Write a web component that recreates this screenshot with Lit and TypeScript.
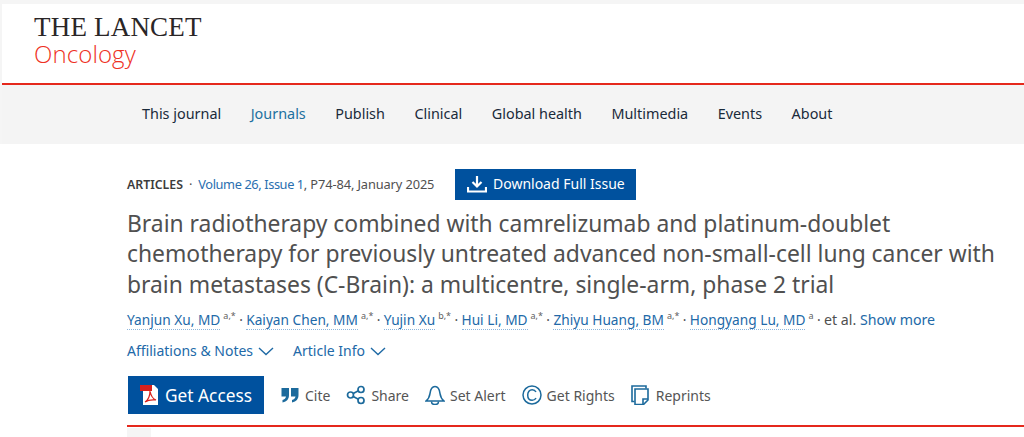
import { LitElement, html, css, svg } from "lit";
import { customElement } from "lit/decorators.js";

const authors: [string, string][] = [
  ["Yanjun Xu, MD", "a,*"],
  ["Kaiyan Chen, MM", "a,*"],
  ["Yujin Xu", "b,*"],
  ["Hui Li, MD", "a,*"],
  ["Zhiyu Huang, BM", "a,*"],
  ["Hongyang Lu, MD", "a"],
];
const nav = ["This journal", "Journals", "Publish", "Clinical", "Global health", "Multimedia", "Events", "About"];

const chevron = html`<svg class="chev" width="16" height="9" viewBox="0 0 16 9"><path d="M1 1l7 6.6L15 1" fill="none" stroke="#1f6aa5" stroke-width="1.4"/></svg>`;

const tools = [
  ["Cite", svg`<path d="M1.500 3h7.500v7c0 4-2 6.500-6.500 7.500v-2.500c2-.6 3.200-1.700 3.500-3.500H1.500zM11 3h7.500v7c0 4-2 6.500-6.500 7.500v-2.500c2-.6 3.200-1.700 3.500-3.500H11z" fill="#1c6a9c"/>`],
  ["Share", svg`<g fill="none" stroke="#1c6a9c" stroke-width="1.700"><circle cx="4.500" cy="10" r="3"/><circle cx="15" cy="4.500" r="3"/><circle cx="15" cy="15.500" r="3"/><path d="M7.200 8.600l5.200-2.800M7.200 11.400l5.200 2.800"/></g>`],
  ["Set Alert", svg`<g fill="none" stroke="#1c6a9c" stroke-width="1.600"><path d="M1 16h18c-2.500-2-3.500-4-4-7.500C14.500 4.500 13 1.500 10 1.500S5.500 4.500 5 8.500C4.500 12 3.500 14 1 16z"/><path d="M6.500 16.500c0 2 1.500 3 3.500 3s3.500-1 3.500-3"/></g>`],
  ["Get Rights", svg`<g fill="none" stroke="#1c6a9c" stroke-width="1.500"><circle cx="10" cy="10" r="9"/><path d="M14 7c-.8-1.600-2.200-2.300-3.800-2.300C7.400 4.700 5.700 7 5.700 10s1.700 5.300 4.500 5.300c1.600 0 3-.7 3.800-2.300"/></g>`],
  ["Reprints", svg`<g fill="none" stroke="#1c6a9c" stroke-width="1.600"><path d="M3.500 16.500H1V1h14v2.500"/><path d="M4 4h13v11l-4.500 4.500H4z"/><path d="M17 14h-5v5" /></g>`],
] as const;

@customElement("app-root")
export class AppRoot extends LitElement {
  static styles = css`
    :host {
      display: block;
      width: 1024px;
      height: 437px;
      overflow: hidden;
      background: #fff;
      font-family: "Noto Sans", sans-serif;
      color: #505050;
    }
    .shell {
      padding: 4px 0 0 2px;
      background: #f5f5f5;
    }
    .brand {
      background: #fff;
      height: 79px;
      box-sizing: border-box;
      padding: 11px 0 0 32px;
    }
    .lancet {
      font-family: "Liberation Serif", serif;
      font-size: 27px;
      line-height: 24px;
      letter-spacing: 0.200px;
      color: #2a2627;
    }
    .onc {
      font-family: "Open Sans", sans-serif;
      font-weight: 300;
      font-size: 24px;
      line-height: 30px;
      color: #ee3124;
      letter-spacing: 0.100px;
    }
    .nav {
      border-top: 2px solid #e5281c;
      box-sizing: border-box;
      height: 61px;
      padding: 0 0 3px 140px;
      background: #f4f4f4;
      display: flex;
      align-items: center;
      gap: 29.500px;
      font-size: 14.400px;
      color: #1a2a3a;
    }
    .nav span.active {
      color: #21709f;
    }
    .article {
      background: #fff;
      padding: 0 0 0 127px;
    }
    .metarow {
      display: flex;
      align-items: center;
      padding-top: 24px;
      height: 32px;
      font-size: 12.800px;
      color: #505050;
    }
    .metarow b {
      font-weight: 600;
      font-size: 12.300px;
      color: #3c3c3c;
    }
    .metarow .sep {
      margin: 0 6px;
    }
    .blue {
      color: #2a6fb0;
      letter-spacing: -0.400px;
    }
    .rest {
      letter-spacing: -0.100px;
    }
    .dl {
      margin-left: 21px;
      width: 181px;
      height: 31px;
      background: #00519e;
      color: #fff;
      display: flex;
      align-items: center;
      justify-content: center;
      gap: 6px;
      font-size: 14px;
      padding-bottom: 1px;
      box-sizing: border-box;
    }
    h1 {
      margin: 8.500px 0 0;
      font-weight: 400;
      font-size: 22.850px;
      line-height: 30.500px;
      color: #505050;
      width: 880px;
    }
    .authors {
      margin-top: 8px;
      font-size: 13.700px;
      line-height: 24px;
      white-space: nowrap;
    }
    .authors a {
      color: #2269a8;
      border-bottom: 1px dotted #8db6dc;
    }
    .authors sup {
      font-size: 9px;
      line-height: 0;
      color: #606060;
      margin-left: 3px;
    }
    .authors .dot {
      margin: 0 3.400px;
    }
    .tail {
      font-size: 14.200px;
    }
    .more {
      color: #2269a8;
    }
    .toggles {
      display: flex;
      gap: 19px;
      margin-top: 7px;
      font-size: 14px;
      line-height: 24px;
      color: #2269a8;
    }
    .toggles span {
      display: flex;
      align-items: center;
      gap: 5px;
    }
    .actions {
      display: flex;
      align-items: center;
      margin-top: 13px;
      height: 38px;
    }
    .access {
      width: 136px;
      height: 38px;
      margin-left: 1px;
      background: #00519e;
      color: #fff;
      display: flex;
      align-items: center;
      justify-content: center;
      gap: 5px;
      font-size: 17.300px;
    }
    .tool {
      display: flex;
      align-items: center;
      gap: 5px;
      font-size: 14px;
      color: #555;
      margin-left: 16px;
    }
    .bottomrule {
      margin-top: 11px;
      height: 2px;
      background: #e5281c;
    }
    .stub {
      width: 24px;
      height: 12px;
      margin-top: 1px;
      background: #f5f5f5;
    }
  `;

  render() {
    return html`
      <div class="shell">
        <div class="brand">
          <div class="lancet">THE LANCET</div>
          <div class="onc">Oncology</div>
        </div>
        <div class="nav">
          ${nav.map((n) => html`<span class=${n === "Journals" ? "active" : ""}>${n}</span>`)}
        </div>
      </div>
      <div class="article">
        <div class="metarow">
          <b>ARTICLES</b><span class="sep">·</span>
          <span class="blue">Volume 26, Issue 1</span><span class="rest">, P74-84, January 2025</span>
          <div class="dl">
            <svg width="20" height="18" viewBox="0 0 20 18"><path d="M10 1v10M5.500 7l4.500 4.500L14.500 7M1 12v4.500h18V12" fill="none" stroke="#fff" stroke-width="2.200"/></svg>
            Download Full Issue
          </div>
        </div>
        <h1>Brain radiotherapy combined with camrelizumab and platinum-doublet chemotherapy for previously untreated advanced non-small-cell lung cancer with brain metastases (C-Brain): a multicentre, single-arm, phase 2 trial</h1>
        <div class="authors">
          ${authors.map(([n, s]) => html`<a>${n}</a><sup>${s}</sup><span class="dot">·</span>`)}<span class="tail">et al. <span class="more">Show more</span></span>
        </div>
        <div class="toggles">
          <span>Affiliations &amp; Notes ${chevron}</span>
          <span>Article Info ${chevron}</span>
        </div>
        <div class="actions">
          <div class="access">
            <svg width="20" height="22" viewBox="0 0 20 22">
              <path d="M3 1h11l4 4v16H3z" fill="#fff"/>
              <rect x="0" y="1" width="12" height="6" fill="#d8201c"/>
              <path d="M5 18c3-2 5-6 5-11 1 5 3 8 6 9-4-.5-8 0-11 2z" fill="none" stroke="#d8201c" stroke-width="1.200"/>
            </svg>
            Get Access
          </div>
          ${tools.map(([t, i]) => html`<div class="tool"><svg width="20" height="20" viewBox="0 0 20 20">${i}</svg>${t}</div>`)}
        </div>
        <div class="bottomrule"></div>
        <div class="stub"></div>
      </div>
    `;
  }
}
